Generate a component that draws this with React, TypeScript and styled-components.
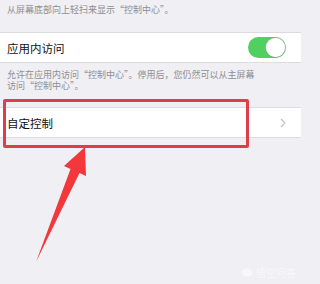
import styled, { createGlobalStyle } from "styled-components";

const GlobalStyle = createGlobalStyle`
  html, body {
    margin: 0;
    padding: 0;
    background: #efeff4;
  }
  body {
    font-family: "Noto Sans CJK SC", "Noto Sans", sans-serif;
  }
`;

const ScPage = styled.div`
  position: relative;
  width: 301px;
  height: 284px;
  overflow: hidden;
  background: #efeff4;
`;

const ScNote = styled.p<{ $top: number; $bottom: number }>`
  margin: 0;
  padding: ${(p) => p.$top}px 44px ${(p) => p.$bottom}px 7px;
  font-size: 9px;
  line-height: 11px;
  color: #8e8e93;
`;

const ScRow = styled.div`
  display: flex;
  align-items: center;
  justify-content: space-between;
  height: 31px;
  padding: 0 14px 0 7px;
  background: #fff;
  border-top: 0.5px solid #dcdce0;
  border-bottom: 0.5px solid #dcdce0;
  box-sizing: border-box;
`;

const ScLabel = styled.span`
  font-size: 11.5px;
  color: #111;
`;

const ScSwitch = styled.div<{ $on: boolean }>`
  position: relative;
  width: 38px;
  height: 21px;
  border-radius: 11px;
  background: ${(p) => (p.$on ? "#4fd05f" : "#e5e5ea")};
  margin-right: 1px;

  &::after {
    content: "";
    position: absolute;
    top: 1px;
    left: ${(p) => (p.$on ? "18px" : "1px")};
    width: 19px;
    height: 19px;
    border-radius: 50%;
    background: #fff;
    box-shadow: 0 0 0 0.5px #b9b9be, 0 1px 1px rgba(0, 0, 0, 0.15);
  }
`;

const ScChevron = styled.svg`
  width: 6px;
  height: 10px;
  margin-right: 1px;
`;

const ScSpacer = styled.div<{ $h: number }>`
  height: ${(p) => p.$h}px;
`;

const ScHighlight = styled.div`
  position: absolute;
  left: 3px;
  top: 99px;
  width: 246px;
  height: 49px;
  box-sizing: border-box;
  border: 3.5px solid #df3e49;
  border-radius: 2px;
  pointer-events: none;
`;

const ScArrow = styled.svg`
  position: absolute;
  left: 0;
  top: 0;
  width: 301px;
  height: 284px;
  pointer-events: none;
`;

const ScWatermark = styled.div`
  position: absolute;
  right: 5px;
  bottom: 4px;
  display: flex;
  align-items: center;
  gap: 3px;
  font-size: 10px;
  color: #f8f8fa;
`;

export default function App() {
  return (
    <>
      <GlobalStyle />
      <ScPage>
        <ScNote $top={4} $bottom={0}>
          从屏幕底部向上轻扫来显示“控制中心”。
        </ScNote>
        <ScSpacer $h={17} />
        <ScRow>
          <ScLabel>应用内访问</ScLabel>
          <ScSwitch $on />
        </ScRow>
        <ScNote $top={6} $bottom={0}>
          允许在应用内访问“控制中心”。停用后，您仍然可以从主屏幕访问“控制中心”。
        </ScNote>
        <ScSpacer $h={16} />
        <ScRow>
          <ScLabel>自定控制</ScLabel>
          <ScChevron viewBox="0 0 6 10">
            <path d="M1 1 L5 5 L1 9" fill="none" stroke="#c4c4c9" strokeWidth="1.2" />
          </ScChevron>
        </ScRow>

        <ScHighlight />
        <ScArrow viewBox="0 0 301 284">
          <polygon
            points="85,147 64,166 70.5,169 36,262 79.5,173 86,176"
            fill="#f2383b"
          />
        </ScArrow>
        <ScWatermark>
          <svg width="12" height="9" viewBox="0 0 12 9">
            <ellipse cx="6" cy="4.5" rx="5.5" ry="4" fill="#f8f8fa" />
          </svg>
          悟空问答
        </ScWatermark>
      </ScPage>
    </>
  );
}
